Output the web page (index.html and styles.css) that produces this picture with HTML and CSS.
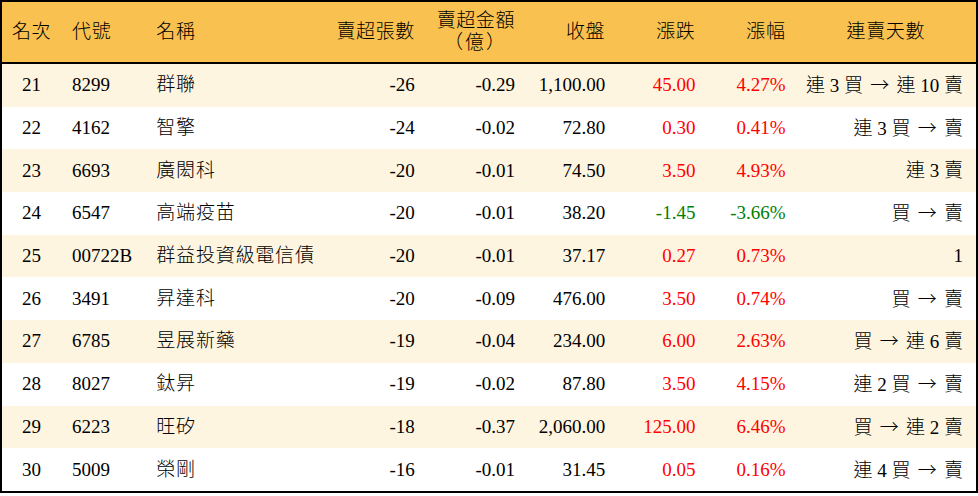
FILE: index.html
```html
<!DOCTYPE html>
<html lang="zh-Hant">
<head>
<meta charset="utf-8">
<link rel="stylesheet" href="styles.css">
</head>
<body>
<table class="rank">
  <colgroup>
    <col class="c1"><col class="c2"><col class="c3"><col class="c4"><col class="c5"><col class="c6"><col class="c7"><col class="c8"><col class="c9">
  </colgroup>
  <thead>
    <tr>
      <th class="ctr">名次</th>
      <th class="lft code">代號</th>
      <th class="lft name">名稱</th>
      <th class="rgt">賣超張數</th>
      <th class="rgt two">賣超金額<br><span class="paren">（億）</span></th>
      <th class="rgt">收盤</th>
      <th class="rgt">漲跌</th>
      <th class="rgt">漲幅</th>
      <th class="ctr days">連賣天數</th>
    </tr>
  </thead>
  <tbody>
    <tr class="odd"><td class="ctr">21</td><td class="lft code">8299</td><td class="lft name">群聯</td><td class="rgt">-26</td><td class="rgt">-0.29</td><td class="rgt">1,100.00</td><td class="rgt up">45.00</td><td class="rgt up">4.27%</td><td class="rgt days">連 3 買 <span class="arr">→</span> 連 10 賣</td></tr>
    <tr><td class="ctr">22</td><td class="lft code">4162</td><td class="lft name">智擎</td><td class="rgt">-24</td><td class="rgt">-0.02</td><td class="rgt">72.80</td><td class="rgt up">0.30</td><td class="rgt up">0.41%</td><td class="rgt days">連 3 買 <span class="arr">→</span> 賣</td></tr>
    <tr class="odd"><td class="ctr">23</td><td class="lft code">6693</td><td class="lft name">廣閎科</td><td class="rgt">-20</td><td class="rgt">-0.01</td><td class="rgt">74.50</td><td class="rgt up">3.50</td><td class="rgt up">4.93%</td><td class="rgt days">連 3 賣</td></tr>
    <tr><td class="ctr">24</td><td class="lft code">6547</td><td class="lft name">高端疫苗</td><td class="rgt">-20</td><td class="rgt">-0.01</td><td class="rgt">38.20</td><td class="rgt down">-1.45</td><td class="rgt down">-3.66%</td><td class="rgt days">買 <span class="arr">→</span> 賣</td></tr>
    <tr class="odd"><td class="ctr">25</td><td class="lft code">00722B</td><td class="lft name">群益投資級電信債</td><td class="rgt">-20</td><td class="rgt">-0.01</td><td class="rgt">37.17</td><td class="rgt up">0.27</td><td class="rgt up">0.73%</td><td class="rgt days">1</td></tr>
    <tr><td class="ctr">26</td><td class="lft code">3491</td><td class="lft name">昇達科</td><td class="rgt">-20</td><td class="rgt">-0.09</td><td class="rgt">476.00</td><td class="rgt up">3.50</td><td class="rgt up">0.74%</td><td class="rgt days">買 <span class="arr">→</span> 賣</td></tr>
    <tr class="odd"><td class="ctr">27</td><td class="lft code">6785</td><td class="lft name">昱展新藥</td><td class="rgt">-19</td><td class="rgt">-0.04</td><td class="rgt">234.00</td><td class="rgt up">6.00</td><td class="rgt up">2.63%</td><td class="rgt days">買 <span class="arr">→</span> 連 6 賣</td></tr>
    <tr><td class="ctr">28</td><td class="lft code">8027</td><td class="lft name">鈦昇</td><td class="rgt">-19</td><td class="rgt">-0.02</td><td class="rgt">87.80</td><td class="rgt up">3.50</td><td class="rgt up">4.15%</td><td class="rgt days">連 2 買 <span class="arr">→</span> 賣</td></tr>
    <tr class="odd"><td class="ctr">29</td><td class="lft code">6223</td><td class="lft name">旺矽</td><td class="rgt">-18</td><td class="rgt">-0.37</td><td class="rgt">2,060.00</td><td class="rgt up">125.00</td><td class="rgt up">6.46%</td><td class="rgt days">買 <span class="arr">→</span> 連 2 賣</td></tr>
    <tr><td class="ctr">30</td><td class="lft code">5009</td><td class="lft name">榮剛</td><td class="rgt">-16</td><td class="rgt">-0.01</td><td class="rgt">31.45</td><td class="rgt up">0.05</td><td class="rgt up">0.16%</td><td class="rgt days">連 4 買 <span class="arr">→</span> 賣</td></tr>
  </tbody>
</table>
</body>
</html>
```

FILE: styles.css
```css
html, body {
  margin: 0;
  padding: 0;
  background: #ffffff;
}

.rank {
  width: 978px;
  border-collapse: collapse;
  table-layout: fixed;
  border: 2px solid #000;
  font-family: "Liberation Serif", "Noto Sans CJK TC", serif;
  font-size: 19px;
  font-weight: 300;
  color: #000;
}

.c1 { width: 60px; }
.c2 { width: 85px; }
.c3 { width: 183px; }
.c4 { width: 95px; }
.c5 { width: 100px; }
.c6 { width: 90px; }
.c7 { width: 90px; }
.c8 { width: 90px; }
.c9 { width: 181px; }

.rank thead tr {
  background: #f9c14f;
  height: 62px;
  border-bottom: 2px solid #000;
}

.rank th {
  font-weight: 300;
  padding: 0 10px 0 0;
  line-height: 22px;
  vertical-align: middle;
  letter-spacing: 0.6px;
}

.rank td {
  padding: 0 10px 0 0;
  height: 42.7px;
  line-height: 22px;
  vertical-align: middle;
  white-space: nowrap;
}

.rank tbody tr { background: #ffffff; }
.rank tbody tr.odd { background: #fef5e1; }

.ctr { text-align: center; }
.rank .ctr { padding: 0; }
.lft { text-align: left; }
.rgt { text-align: right; }

.rank .code { padding: 0 0 0 11px; }
.rank td.name { padding: 0 0 0 10px; letter-spacing: 0.8px; }
.rank th.name { padding: 0 0 0 10px; }
.rank .days { padding: 0 12px; }
.rank td.days { padding: 0 13px 0 0; }

.paren { letter-spacing: 2px; padding-right: 8px; }

.arr {
  font-family: "Noto Sans CJK TC", sans-serif;
  display: inline-block;
  width: 24px;
  text-align: center;
}

.up { color: #ff0000; }
.down { color: #008000; }
```
